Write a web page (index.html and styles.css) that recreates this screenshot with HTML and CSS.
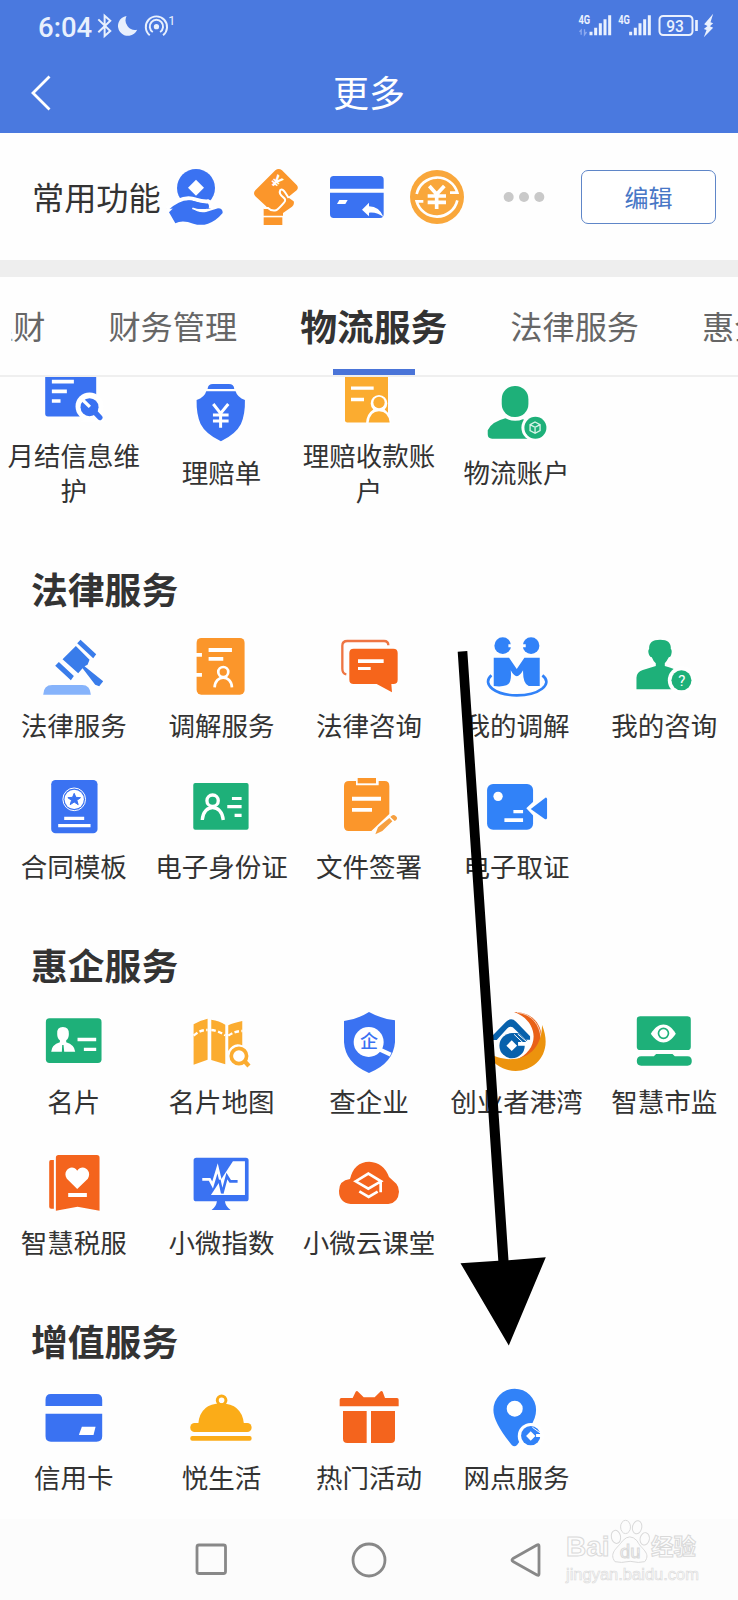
FILE: index.html
```html
<!DOCTYPE html>
<html lang="zh-CN">
<head>
<meta charset="utf-8">
<title>更多</title>
<link rel="stylesheet" href="styles.css">
</head>
<body>
<div class="phone">
  <header class="header">
    <div class="status">
      <span class="time">6:04</span>
      <svg class="status-left" viewBox="285 36 250 84" width="83" height="28" fill="none" stroke="#e8f0fd" stroke-width="6">
        <path d="M295 58L331 93L314 108V47L331 62L295 97"/>
        <path d="M380 48A30 30 0 1 0 412 89A29 29 0 0 1 380 48Z" fill="#e8f0fd" stroke="none"/>
        <circle cx="470" cy="80" r="8" fill="#e8f0fd" stroke="none"/>
        <path d="M459 96A20 20 0 1 1 481 96M450 106A32 32 0 1 1 490 106"/>
        <text x="506" y="75" font-size="38" class="glyph" fill="#e8f0fd" stroke="none">1</text>
      </svg>
      <svg class="status-right" viewBox="620 36 425 84" width="142" height="28" fill="#eaf1fe">
        <text x="630" y="73" font-size="38" font-weight="700" class="glyph" textLength="35" lengthAdjust="spacingAndGlyphs">4G</text>
        <path d="M638 104V90l-5 5M648 88v16l6-8" fill="none" stroke="#8daaf0" stroke-width="4"/>
        <path d="M663 95h9v11h-9zM677 83h9v23h-9zM691 70h9v36h-9zM705 58h9v48h-9zM719 46h9v60h-9z"/>
        <text x="749" y="73" font-size="38" font-weight="700" class="glyph" textLength="35" lengthAdjust="spacingAndGlyphs">4G</text>
        <path d="M782 95h9v11h-9zM796 83h9v23h-9zM810 70h9v36h-9zM824 58h9v48h-9zM838 46h9v60h-9z"/>
        <rect x="873" y="48" width="99" height="57" rx="11" fill="none" stroke="#eaf1fe" stroke-width="6"/>
        <path d="M980 60h8v33h-8z"/>
        <text x="893" y="95" font-size="50" font-weight="500" class="glyph" textLength="53" lengthAdjust="spacingAndGlyphs">93</text>
        <path d="M1034 41L1007 73L1017 78L1006 87L1014 90L1006 112L1034 83L1024 79L1034 70L1026 67Z"/>
      </svg>
    </div>
    <div class="titlebar">
      <svg class="back" viewBox="0 0 20 36" width="20" height="36" fill="none" stroke="#fff" stroke-width="2.8"><path d="M18.5 1.5L2 18L18.5 34.500"/></svg>
      <h1 class="page-title">更多</h1>
    </div>
  </header>

  <section class="quick">
    <span class="quick-label">常用功能</span>
    <svg viewBox="468 81 240 180" width="80" height="60" fill="#3a72f2">
      <circle cx="588" cy="144" r="57"/>
      <path d="M588 119L612 143L588 167L564 143Z" fill="#fff"/>
      <path d="M500 206Q548 163 588 179Q606 185 624 184Q636 190 632 206" stroke="#fff" stroke-width="12"/>
      <path d="M507 217Q548 173 583 184Q602 192 616 191Q629 194 623 206Q604 209 577 204Q594 220 618 216L654 205Q669 205 668 219Q648 243 624 251Q603 258 580 251Q547 239 526 250Z"/>
      <path d="M577 205Q594 214 622 209" fill="none" stroke="#fff" stroke-width="5"/>
    </svg>
    <svg viewBox="708 81 240 180" width="80" height="60" fill="#fb962b">
      <path d="M826 91Q836 83 846 91L890 135Q897 143 890 151L864 172L881 184Q884 193 876 200L849 219V227H791V205L800 200L766 169Q758 160 766 151Z"/>
      <path d="M790 204H804Q814 214 828 211Q836 207 852 188Q860 179 850 172Q835 161 841 150Q848 145 856 158L866 174" fill="none" stroke="#fff" stroke-width="6"/>
      <path d="M791 232h56v23h-56z"/>
      <text x="0" y="17" font-size="50" font-weight="700" text-anchor="middle" class="glyph" fill="#fff" transform="translate(830 124) rotate(43)">¥</text>
    </svg>
    <svg viewBox="948 81 240 180" width="80" height="60" fill="#3a72f2">
      <path d="M990 146V119Q990 108 1001 108H1140Q1151 108 1151 119V146ZM990 158H1151V222Q1151 234 1140 234H1001Q990 234 990 222Z"/>
      <path d="M1018 180H1043L1036 192H1011Z" fill="#fff"/>
      <path d="M1086 209L1107 188V199Q1138 199 1151 232Q1133 216 1107 218V229Z" fill="#fff"/>
    </svg>
    <svg viewBox="81 81 240 180" width="80" height="60" fill="#f9a73b">
      <circle cx="204" cy="171" r="81"/>
      <g fill="none" stroke="#fff" stroke-width="8"><path d="M143 162A63 63 0 0 1 265 158H243M265 181A63 63 0 0 1 143 184H163"/></g>
      <g fill="none" stroke="#fff" stroke-width="11"><path d="M181 138L203 163L226 138M203 163V207M176 168H231M176 187H231"/></g>
    </svg>
    <svg class="dots" viewBox="-2 -30 126 60" width="42" height="20" fill="#c9c9c9"><circle cx="15" r="15"/><circle cx="61" r="15"/><circle cx="107" r="15"/></svg>
    <button class="edit">编辑</button>
  </section>

  <div class="band"></div>

  <nav class="tabs">
    <span class="tab">理财</span>
    <span class="tab">财务管理</span>
    <span class="tab active">物流服务</span>
    <span class="tab">法律服务</span>
    <span class="tab">惠企服务</span>
  </nav>

  <main class="content">
    <div class="grid logistics">
      <div class="item">
        <svg viewBox="101.4 -13.5 240 216" fill="#3a72f2">
          <path d="M135 20H288V153H143Q135 153 135 145Z"/>
          <path d="M155 43h66v11h-66zM155 72h45v11h-45zM155 101h26v11h-26z" fill="#fff"/>
          <circle cx="268" cy="123" r="42" fill="#fff"/><path d="M260 155H310V170H240Z" fill="#fff"/>
          <circle cx="268" cy="125" r="27"/><path d="M283 139L299 156" stroke="#3a72f2" stroke-width="16" stroke-linecap="round"/>
          <path d="M246 102L269 124" stroke="#fff" stroke-width="10"/>
        </svg>
        <span class="label">月结信息维护</span>
      </div>
      <div class="item">
        <svg viewBox="544.2 39 240 216" fill="#3a72f2">
          <path d="M624 72Q625 57 640 57H688Q703 57 704 72Z"/>
          <path d="M620 79H708Q713 97 736 105Q737 148 724 177Q709 207 664 229Q618 207 603 177Q590 148 591 105Q615 97 620 79Z"/>
          <path d="M641 117L663 145L686 117M663 145V188M640 150H687M640 168H687" fill="none" stroke="#fff" stroke-width="9"/>
        </svg>
        <span class="label">理赔单</span>
      </div>
      <div class="item">
        <svg viewBox="987 -13.5 240 216" fill="#fbac30">
          <path d="M1035 20H1164V171H1042Q1035 171 1035 164Z"/>
          <path d="M1053 63h68v10h-68zM1053 97h39v10h-39z" fill="#fff"/>
          <path d="M1098 174Q1099 145 1120 132A25 25 0 1 1 1154 132L1172 150V176Z" fill="#fff"/>
          <circle cx="1137" cy="111" r="17"/>
          <path d="M1106 171Q1110 137 1137 137Q1165 137 1169 171Z"/>
        </svg>
        <span class="label">理赔收款账户</span>
      </div>
      <div class="item">
        <svg viewBox="322.800 39 240 216" fill="#1eb079">
          <rect x="397" y="63" width="80" height="93" rx="39"/>
          <path d="M408 160Q435 174 462 162L480 221H368Q355 221 355 208V196Q365 171 408 160Z"/>
          <circle cx="497" cy="188" r="41" fill="#fff"/><circle cx="498" cy="188" r="33"/>
          <path d="M497 171L512 179V197L497 205L482 197V179ZM482 179L497 187L512 179M497 187V205" fill="none" stroke="#d8f4e8" stroke-width="4"/>
        </svg>
        <span class="label">物流账户</span>
      </div>
    </div>

    <section class="group">
      <h2 class="group-title">法律服务</h2>
      <div class="grid">
        <div class="item">
          <svg viewBox="101.4 33 240 216" fill="#397cea">
            <path d="M241 59L288 103L279 115L231 70ZM227 78L268 119L262 134L253 139L309 184L297 199L285 194L247 145L234 160L187 118ZM176 126L221 168L212 181L165 137Z"/>
            <path d="M129 224Q130 195 156 195H246Q270 195 272 224Z" fill="#86b3fb"/>
          </svg>
          <span class="label">法律服务</span>
        </div>
        <div class="item">
          <svg viewBox="544.2 33 240 216" fill="#fb962b">
            <rect x="591" y="54" width="144" height="170" rx="14"/>
            <path d="M585 99h22v11h-22zM585 159h22v11h-22zM627 84h70v12h-70zM627 111h44v11h-44z" fill="#fff"/>
            <g fill="none" stroke="#fff" stroke-width="8"><circle cx="671" cy="156" r="15"/><path d="M645 202C647 163 695 163 697 202"/></g>
          </svg>
          <span class="label">调解服务</span>
        </div>
        <div class="item">
          <svg viewBox="987 33 240 216" fill="#f6651b">
            <path d="M1165 76Q1165 63 1152 63H1042Q1027 63 1027 77V146Q1027 161 1039 163" fill="none" stroke="#ee7543" stroke-width="7"/>
            <path d="M1061 86H1180Q1193 86 1193 99V179Q1193 192 1180 192H1174L1176 217L1130 192H1061Q1048 192 1048 179V99Q1048 86 1061 86Z"/>
            <path d="M1074 118h77v11h-77zM1074 141h38v9h-38z" fill="#fff"/>
          </svg>
          <span class="label">法律咨询</span>
        </div>
        <div class="item">
          <svg viewBox="322.800 33 240 216" fill="#3182f8">
            <circle cx="400" cy="77" r="25"/><circle cx="485" cy="77" r="25"/>
            <path d="M417 73h14v9h-14zM455 73h14v9h-14z" fill="#fff"/>
            <path d="M373 113H419L442 147L465 113H511V198H478Q460 192 461 151Q442 186 424 151Q428 190 411 196Q396 201 373 198Z"/>
            <path d="M366 166C335 194 380 226 442 226C507 226 554 193 519 166" fill="none" stroke="#3182f8" stroke-width="8"/>
          </svg>
          <span class="label">我的调解</span>
        </div>
        <div class="item">
          <svg viewBox="765.6 33 240 216" fill="#1eb079">
            <path d="M841 87Q839 59 874 59Q908 59 906 87Q911 91 907 105Q905 112 900 112Q893 125 888 130V138Q920 146 933 157V208H803V173Q803 157 822 150L861 138V130Q853 123 849 112Q844 112 841 105Q836 92 841 87Z"/>
            <circle cx="939" cy="181" r="42" fill="#fff"/><circle cx="938" cy="181" r="30"/>
            <text x="939" y="197" font-size="45" text-anchor="middle" class="glyph" fill="#fff">?</text>
          </svg>
          <span class="label">我的咨询</span>
        </div>
        <div class="item">
          <svg viewBox="101.4 456 240 216" fill="#3a72f2">
            <rect x="153" y="480" width="139" height="160" rx="13"/>
            <circle cx="222" cy="538" r="34" fill="none" stroke="#fff" stroke-width="3"/><circle cx="222" cy="538" r="29" fill="#fff"/>
            <path d="M222 520L227 532L241 533L230 541L234 554L222 546L210 554L214 541L203 533L217 532Z" stroke="#3a72f2" stroke-width="3" stroke-linejoin="round"/>
            <path d="M192 590h60v10h-60zM174 612h97v10h-97z" fill="#fff"/>
          </svg>
          <span class="label">合同模板</span>
        </div>
        <div class="item">
          <svg viewBox="544.2 456 240 216" fill="#1eb079">
            <rect x="581" y="489" width="166" height="140" rx="6"/>
            <g fill="none" stroke="#fff" stroke-width="10"><circle cx="639" cy="542" r="17"/><path d="M608 600C611 550 667 550 671 600"/></g>
            <path d="M697 531h29v9h-29zM683 555h43v10h-43zM705 581h21v10h-21z" fill="#fff"/>
          </svg>
          <span class="label">电子身份证</span>
        </div>
        <div class="item">
          <svg viewBox="987 456 240 216" fill="#fb962b">
            <path d="M1047 483H1068V496H1136V483H1154Q1168 483 1168 498V582L1114 633H1046Q1032 633 1032 619V498Q1032 483 1047 483Z"/>
            <path d="M1073 474h55v16h-55z"/>
            <path d="M1056 530h87v12h-87zM1056 564h60v11h-60z" fill="#fff"/>
            <path d="M1126 643L1134 622L1168 594L1177 604L1147 633ZM1174 588Q1181 582 1187 588Q1195 593 1188 601L1184 603L1171 591Z" fill="#f6a041"/>
          </svg>
          <span class="label">文件签署</span>
        </div>
        <div class="item">
          <svg viewBox="322.800 456 240 216" fill="#3182f8">
            <rect x="353" y="492" width="138" height="137" rx="18"/>
            <path d="M475 565L494 547V585Z" fill="#fff" stroke="#fff" stroke-width="6"/>
            <path d="M484 567L528 533Q533 532 533 538V594Q532 600 526 597Z"/>
            <circle cx="386" cy="529" r="14" fill="#fff"/><path d="M432 570h29v10h-29zM405 595h56v11h-56z" fill="#fff"/>
          </svg>
          <span class="label">电子取证</span>
        </div>
      </div>
    </section>

    <section class="group">
      <h2 class="group-title">惠企服务</h2>
      <div class="grid">
        <div class="item">
          <svg viewBox="101.4 201 240 216" fill="#1eb079">
            <rect x="137" y="235" width="167" height="134" rx="11"/>
            <path d="M171 282Q169 261 188 261Q207 261 206 282Q206 295 198 301V307Q223 315 225 335H192L190 315H186L185 335H153Q154 315 179 307V301Q171 295 171 282ZM232 293h56v11h-56zM251 323h37v10h-37z" fill="#fff"/>
          </svg>
          <span class="label">名片</span>
        </div>
        <div class="item">
          <svg viewBox="544.2 201 240 216" fill="#fbac30">
            <path d="M582 253Q601 241 624 236V359L582 374ZM635 239Q659 242 677 254V373L635 360ZM686 256Q702 248 728 243V316Q702 305 686 333Z"/>
            <path d="M582 287Q602 269 624 270M635 270Q654 271 677 286M686 287Q706 273 729 273" fill="none" stroke="#fff" stroke-width="7" stroke-dasharray="14 7"/>
            <circle cx="718" cy="348" r="23" fill="#fff" stroke="#fbac30" stroke-width="11"/><path d="M735 364L748 378" stroke="#fbac30" stroke-width="13"/>
          </svg>
          <span class="label">名片地图</span>
        </div>
        <div class="item">
          <svg viewBox="987 201 240 216" fill="#3a72f2">
            <path d="M1107 216Q1142 236 1185 241V307Q1180 370 1107 399Q1036 370 1032 307V243Q1073 238 1107 216Z"/>
            <circle cx="1106" cy="306" r="45" fill="#fff"/><path d="M1132 325L1172 344" stroke="#fff" stroke-width="12"/>
            <text x="1107" y="325" font-size="54" font-weight="500" text-anchor="middle" class="glyph">企</text>
          </svg>
          <span class="label">查企业</span>
        </div>
        <div class="item">
          <svg viewBox="322.800 201 240 216" fill="#0761ac">
            <path d="M434 216C532 214 553 348 438 360C512 333 511 244 434 216Z" fill="#e96117"/>
            <path d="M442 217C489 222 512 255 515 296" fill="none" stroke="#fff" stroke-width="2"/>
            <path d="M518 255C553 340 496 393 439 393C405 393 367 373 354 337C408 374 516 369 518 255Z" fill="#ec930d"/>
            <path d="M360 296L410 245Q425 231 440 245L482 289V299H469L430 262Q422 257 414 265L382 300H362Z"/>
            <circle cx="428" cy="317" r="38"/><path d="M430 279L446 279L474 303L461 310Z"/>
            <path d="M427 301L443 317L427 333L411 317ZM446 306H477V317H446Z" fill="#fff"/>
            <path d="M434 283L465 312M445 282L473 306" stroke="#fff" stroke-width="3"/>
          </svg>
          <span class="label">创业者港湾</span>
        </div>
        <div class="item">
          <svg viewBox="765.6 201 240 216" fill="#1eb079">
            <rect x="804" y="229" width="162" height="101" rx="10"/>
            <path d="M846 281C869 244 899 244 921 281C899 316 869 316 846 281Z" fill="#fff"/><circle cx="884" cy="280" r="15" fill="#fff" stroke="#1eb079" stroke-width="5"/>
            <path d="M817 349H855L862 342H911L918 349H956Q969 349 969 363Q969 377 956 377H817Q804 377 804 363Q804 349 817 349Z"/>
          </svg>
          <span class="label">智慧市监</span>
        </div>
        <div class="item">
          <svg viewBox="101.4 624 240 216" fill="#f4641d">
            <path d="M147 666Q147 660 152 660H161V806H153Q147 806 147 800ZM175 645H290Q298 645 298 653V812L232 800L167 812V653Q167 645 175 645Z"/>
            <path d="M231 747L200 716C184 691 217 669 231 692C246 669 278 691 263 716ZM204 759h56v12h-56z" fill="#fff"/>
          </svg>
          <span class="label">智慧税服</span>
        </div>
        <div class="item">
          <svg viewBox="544.2 624 240 216" fill="#3a72f2">
            <path d="M590 653H739Q747 653 747 661V776Q747 784 739 784H676Q678 800 693 810H636Q650 800 652 784H590Q582 784 582 776V661Q582 653 590 653Z"/>
            <path d="M700 664H736V765H634Z" fill="#fff"/>
            <path d="M608 718H630L639 735L654 685L666 735L670 718" fill="none" stroke="#fff" stroke-width="8"/>
            <path d="M659 719L668 760L682 708L692 724H714" fill="none" stroke="#3a72f2" stroke-width="8"/>
          </svg>
          <span class="label">小微指数</span>
        </div>
        <div class="item">
          <svg viewBox="987 624 240 216" fill="#f4641d">
            <path d="M1052 792Q1017 788 1017 753Q1017 721 1050 717Q1062 666 1108 665Q1151 667 1167 711L1189 731Q1197 741 1197 755Q1195 788 1165 792Z"/>
            <path d="M1067 724L1105 701L1143 724L1105 746ZM1142 724V757M1078 754L1106 771L1133 755" fill="none" stroke="#fff" stroke-width="8"/>
          </svg>
          <span class="label">小微云课堂</span>
        </div>
      </div>
    </section>

    <section class="group">
      <h2 class="group-title">增值服务</h2>
      <div class="grid">
        <div class="item">
          <svg viewBox="101.4 219 240 216" fill="#3a72f2">
            <path d="M136 288V269Q136 252 152 252H289Q306 252 306 269V288ZM136 311H306V379Q306 395 289 395H152Q136 395 136 379Z"/><path d="M245 350H286L280 375H236Z" fill="#fff"/>
          </svg>
          <span class="label">信用卡</span>
        </div>
        <div class="item">
          <svg viewBox="544.2 219 240 216" fill="#fbac18">
            <circle cx="666" cy="271" r="13" fill="none" stroke="#fbac18" stroke-width="9"/>
            <path d="M596 341Q602 281 664 280Q726 281 733 341Z"/><rect x="572" y="339" width="184" height="27" rx="13"/><rect x="572" y="378" width="184" height="14" rx="6"/>
          </svg>
          <span class="label">悦生活</span>
        </div>
        <div class="item">
          <svg viewBox="987 219 240 216" fill="#f4641d">
            <path d="M1030 264H1058L1067 245Q1071 241 1075 246L1091 262H1124L1140 246Q1144 241 1148 245L1155 264H1191Q1196 264 1196 269V289H1019V269Q1019 264 1024 264ZM1029 303H1100V399H1042Q1029 399 1029 386ZM1113 303H1185V386Q1185 399 1173 399H1113Z"/>
          </svg>
          <span class="label">热门活动</span>
        </div>
        <div class="item">
          <svg viewBox="322.800 129 240 216" fill="#3182f8">
            <path d="M372 210A64 64 0 0 1 500 210Q500 236 482 260L443 315Q435 323 427 315Q372 248 372 210Z"/><circle cx="436" cy="206" r="24" fill="#fff"/>
            <circle cx="484" cy="288" r="39" fill="#fff"/><circle cx="484" cy="287" r="29"/>
            <path d="M484 274L498 288L484 302L470 288ZM500 282H520V291H500Z" fill="#fff"/><path d="M489 262L514 280" stroke="#fff" stroke-width="3"/>
          </svg>
          <span class="label">网点服务</span>
        </div>
      </div>
    </section>
  </main>

  <footer class="navbar">
    <svg viewBox="0 0 34 34" width="34" height="34"><rect x="2" y="2" width="28.500" height="28.500" rx="2"/></svg>
    <svg viewBox="0 0 36 36" width="36" height="36"><circle cx="18" cy="18" r="16"/></svg>
    <svg viewBox="0 0 34 36" width="34" height="36"><path d="M30 4V32Q30 34 28 33L4 19.500Q2 18 4 16.500L28 3Q30 2 30 4Z" stroke-linejoin="round"/></svg>
  </footer>

  <div class="watermark">
    <div class="brand">
      <span class="brand-text">Bai</span>
      <svg viewBox="723 538 124 136" width="41" height="45" fill="#fcfcfc" stroke="#d9d9d9" stroke-width="3">
        <ellipse cx="741" cy="592" rx="14" ry="20" transform="rotate(-12 741 592)"/><ellipse cx="770" cy="562" rx="15" ry="20"/><ellipse cx="805" cy="563" rx="14" ry="20" transform="rotate(12 805 563)"/><ellipse cx="828" cy="598" rx="14" ry="19" transform="rotate(12 828 598)"/>
        <path d="M738 667C718 640 747 625 761 604Q783 580 805 604C815 628 849 640 828 667Q811 672 784 666Q755 672 738 667Z"/>
        <text x="784" y="655" font-size="56" text-anchor="middle" class="glyph">du</text>
      </svg>
      <span class="brand-text cjk">经验</span>
    </div>
    <div class="site">jingyan.baidu.com</div>
  </div>

  <svg class="arrow" viewBox="0 0 90 700" width="90" height="700"><path d="M.7 4.700L10.300 4L51.500 613.300L88.800 610.200L51.800 698.500L3.500 616.200L41.300 613.700Z"/></svg>
</div>
</body>
</html>
```

FILE: styles.css
```css
* {
  box-sizing: border-box;
}

body {
  margin: 0;
  background: #fff;
  color: #333;
  font-family: "Noto Sans CJK SC", sans-serif;
}

svg {
  display: block;
  flex: none;
}

.glyph {
  font-family: Roboto, "Noto Sans CJK SC", sans-serif;
}

.phone {
  position: relative;
  display: flex;
  flex-direction: column;
  width: 738px;
  height: 1600px;
  overflow: hidden;
  background: #fefefe;
}

/* Header */
.header {
  height: 133px;
  background: #4a79df;
  color: #fff;
}

.status {
  display: flex;
  align-items: center;
  height: 52px;
  padding: 0 21px 0 38px;
}

.time {
  width: 57px;
  padding-top: 3px;
  color: #e8f0fd;
  font-family: Roboto, sans-serif;
  font-size: 27.500px;
  font-weight: 500;
  line-height: 32px;
}

.status-right {
  margin-left: auto;
}

.titlebar {
  display: grid;
  grid-template-columns: 100px 1fr 100px;
  align-items: center;
  height: 81px;
}

.back {
  margin-left: 31px;
}

.page-title {
  margin: 0 0 4px;
  font-size: 36px;
  font-weight: 400;
  line-height: 50px;
  text-align: center;
}

/* Frequently used functions */
.quick {
  display: flex;
  align-items: center;
  height: 127px;
  padding: 0 22px 0 32px;
}

.quick-label {
  width: 124px;
  margin-bottom: 2px;
  font-size: 32.200px;
  line-height: 46px;
  white-space: nowrap;
}

.dots {
  margin-left: 27px;
}

.edit {
  width: 135px;
  height: 54px;
  margin-left: auto;
  padding: 0;
  border: 1.500px solid #5f86c8;
  border-radius: 7px;
  background: #fff;
  color: #4877c6;
  font: 24px/50px "Noto Sans CJK SC", sans-serif;
}

.band {
  height: 17px;
  background: #eee;
}

/* Category tabs */
.tabs {
  display: flex;
  flex: none;
  gap: 63px;
  height: 100px;
  overflow: hidden;
  border-bottom: 2px solid #efefef;
}

.tab {
  flex: none;
  color: #666;
  font-size: 32.200px;
  line-height: 97px;
}

.tab:first-child {
  margin-left: -19px;
  clip-path: inset(0 0 0 30.500px);
}

.tab.active {
  display: flex;
  flex-direction: column;
  align-items: center;
  height: 98px;
  color: #333;
  font-size: 36.800px;
  font-weight: 700;
}

.tab.active::after {
  content: "";
  width: 82px;
  height: 6px;
  margin-top: -5px;
  background: #4a74d8;
}

/* Service grid */
.content {
  flex: 1;
  overflow: hidden;
}

.grid {
  display: grid;
  grid-template-columns: repeat(5, 1fr);
  grid-auto-rows: 141px;
}

.item {
  display: flex;
  flex-direction: column;
  align-items: center;
  gap: 4px;
  padding-top: 11px;
}

.item svg {
  width: 80px;
  height: 72px;
}

.label {
  width: 135px;
  font-size: 26.500px;
  line-height: 35px;
  text-align: center;
}

.logistics {
  grid-auto-rows: 150px;
  margin-top: -17px;
}

.logistics .item {
  justify-content: center;
  padding: 0 0 3px;
}

.logistics + .group {
  margin-top: 50px;
}

.group {
  margin-top: 34px;
}

.group-title {
  margin: 0;
  padding: 0 0 4px 31px;
  font-size: 36.800px;
  font-weight: 700;
  line-height: 56px;
}

/* System navigation */
.navbar {
  display: flex;
  align-items: center;
  justify-content: space-between;
  height: 81px;
  padding: 0 195px;
  background: #fcfcfc;
}

.navbar svg {
  fill: none;
  stroke: #888;
  stroke-width: 2.800px;
}

/* Watermark over the navigation bar */
.watermark {
  position: absolute;
  left: 566px;
  top: 1519px;
  width: 134px;
  color: #fcfcfc;
  -webkit-text-stroke: 1px #d9d9d9;
}

.brand {
  display: flex;
  align-items: flex-end;
  height: 45px;
}

.brand-text {
  width: 44px;
  font: 700 28px/34px "Liberation Sans", sans-serif;
}

.brand-text.cjk {
  width: 46px;
  font: 700 22.500px/38px "Noto Sans CJK SC", sans-serif;
}

.site {
  font: 16.500px/20px "Liberation Sans", sans-serif;
  -webkit-text-stroke-width: .6px;
}

.arrow {
  position: absolute;
  left: 457px;
  top: 647px;
}
```
